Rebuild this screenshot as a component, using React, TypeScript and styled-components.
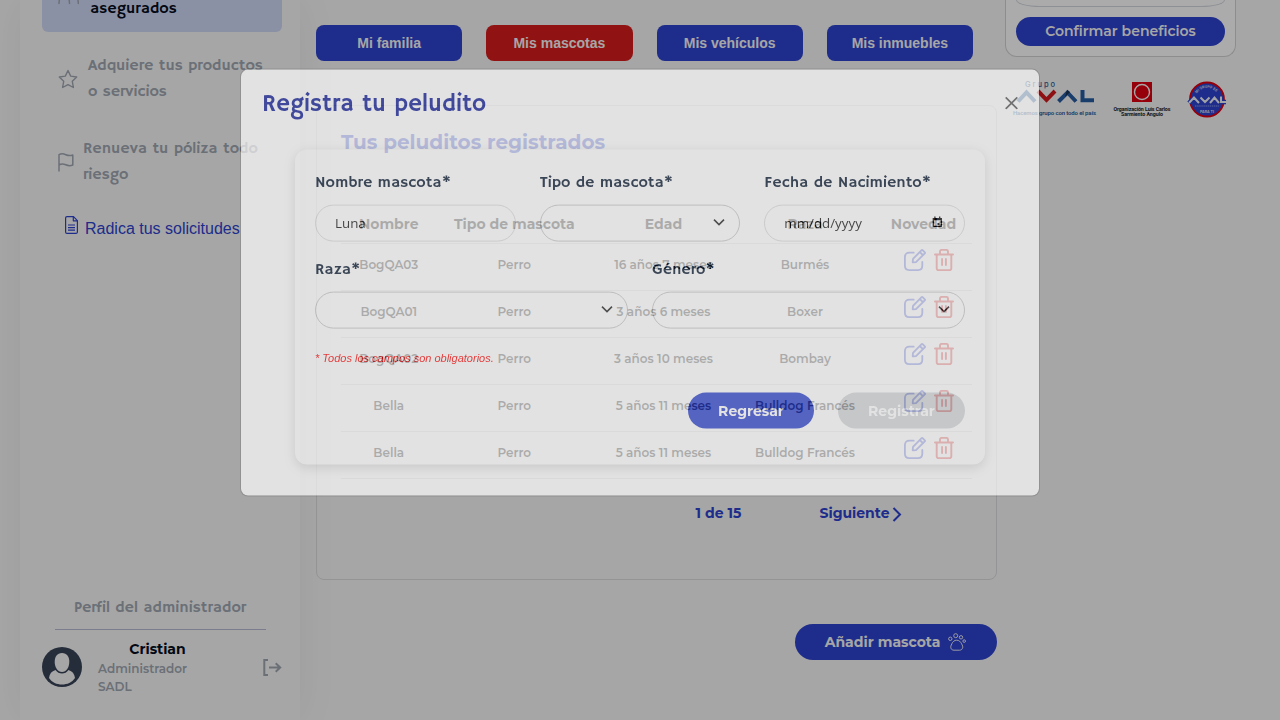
import React from "react";
import styled, { createGlobalStyle } from "styled-components";

const BLUE = "#2d42cf";
const MUTED = "#a0a7b2";
const ROUND = `Montserrat, Inter, sans-serif`;
const HUMAN = `"Hammersmith One", "Open Sans", sans-serif`;

const Global = createGlobalStyle`
  * { box-sizing: border-box; }
  body { margin: 0; background: #f8f8f8; overflow: hidden; }
  button, input { font: inherit; }
`;

const Page = styled.div`
  display: flex;
  width: 1280px;
  height: 720px;
  padding-left: 20px;
  overflow: hidden;
  background: #f8f8f8;
  font-family: ${ROUND};
`;

const Txt = styled.span`
  white-space: nowrap;
`;

/* ---------- sidebar ---------- */
const Sidebar = styled.aside`
  width: 280px;
  height: 720px;
  padding: 0 18px 0 22px;
  display: flex;
  flex-direction: column;
  flex-shrink: 0;
  box-shadow: 0 0 40px rgba(0, 0, 0, 0.06);
`;

const Nav = styled.nav`
  display: flex;
  flex-direction: column;
  height: 590px;
`;

const ActiveItem = styled.div`
  display: flex;
  height: 32px;
  flex-shrink: 0;
  padding-left: 14px;
  gap: 10px;
  border-radius: 0 0 6px 6px;
  background: #d0d9f5;
  color: #050d1c;
  font: 400 16px/26px ${HUMAN};
  svg { margin-top: -14px; color: ${MUTED}; }
  span { margin-top: -4px; }
`;

const NavItem = styled.div<{ $top: number; $gap: number }>`
  display: flex;
  align-items: center;
  height: 52px;
  flex-shrink: 0;
  margin-top: ${(p) => p.$top}px;
  padding-left: 16px;
  gap: ${(p) => p.$gap}px;
  color: ${MUTED};
  font: 400 16px/26px ${HUMAN};
  svg { flex-shrink: 0; }
`;

const Lines = styled.div`
  display: flex;
  flex-direction: column;
`;

const RequestLink = styled.div`
  display: flex;
  align-items: center;
  gap: 7px;
  margin-top: 28px;
  padding-left: 23px;
  color: ${BLUE};
  font: 16px/26px "Liberation Sans", Arial, sans-serif;
  svg { margin-top: -8px; }
`;

const ProfileTitle = styled.div`
  width: 211px;
  height: 40px;
  margin-left: 13px;
  padding-right: 1px;
  border-bottom: 1px solid #b9b9d6;
  text-align: center;
  color: ${MUTED};
  font: 400 16px/37px ${HUMAN};
`;

const Profile = styled.div`
  display: flex;
  padding-top: 10px;
`;

const AvatarBox = styled.div`
  padding-top: 7px;
  width: 56px;
`;

const ProfileText = styled.div`
  display: flex;
  flex-direction: column;
  width: 165px;
  color: ${MUTED};
  font: 600 12px/18px ${ROUND};
`;

const UserName = styled.strong`
  width: 119px;
  margin-bottom: 1px;
  text-align: center;
  color: #050d1c;
  font: 700 14px/19px ${ROUND};
`;

const LogoutBox = styled.div`
  padding-top: 19px;
  color: ${MUTED};
`;

/* ---------- main column ---------- */
const Main = styled.main`
  width: 697px;
  padding: 25px 0 0 16px;
  display: flex;
  flex-direction: column;
`;

const Tabs = styled.div`
  display: flex;
  gap: 24px;
  width: 657px;
`;

const Tab = styled.button<{ $active?: boolean }>`
  flex: 1;
  height: 36px;
  padding: 0;
  border: 0;
  border-radius: 8px;
  background: ${(p) => (p.$active ? "#d91b1b" : BLUE)};
  color: #f8f8f8;
  font: 700 14px "Liberation Sans", Arial, sans-serif;
`;

const PetsCard = styled.section`
  height: 475px;
  margin-top: 44px;
  padding: 23px 24px 0;
  border: 1px solid #dddde0;
  border-radius: 8px;
`;

const PetsTitle = styled.h2`
  margin: 0;
  color: ${BLUE};
  font: 700 20px/26px ${ROUND};
`;

const Table = styled.div`
  margin-top: 49px;
`;

const Row = styled.div<{ $head?: boolean }>`
  display: grid;
  grid-template-columns: 95.500px 155.500px 143px 140px 97px;
  align-items: ${(p) => (p.$head ? "center" : "start")};
  justify-items: center;
  height: ${(p) => (p.$head ? 40 : 47)}px;
  border-bottom: 1px solid #d6d6d6;
  color: #060606;
  font: ${(p) => (p.$head ? "700 14px/36px" : "600 12px/20px")} ${ROUND};
  padding-top: ${(p) => (p.$head ? 0 : 11)}px;
`;

const Actions = styled.div`
  display: flex;
  gap: 8px;
  margin-top: -6px;
  padding-left: 10px;
`;

const Pager = styled.div`
  display: flex;
  margin-top: 24px;
  padding-left: 354.500px;
  color: ${BLUE};
  font: 700 14px/20px ${ROUND};
`;

const PageCount = styled.span`
  width: 124px;
`;

const NextPage = styled.span`
  display: flex;
  align-items: center;
  gap: 3px;
  svg { margin-top: 2px; }
`;

const AddPet = styled.button`
  display: flex;
  align-items: center;
  justify-content: center;
  gap: 8px;
  align-self: flex-end;
  width: 202px;
  height: 36px;
  margin-top: 44px;
  border: 0;
  border-radius: 18px;
  padding: 0 7px 0 6px;
  background: ${BLUE};
  color: #f8f8f8;
  font: 700 14px ${ROUND};
`;

/* ---------- right column ---------- */
const Right = styled.aside`
  padding-left: 8px;
  width: 239px;
`;

const Benefits = styled.section`
  height: 57px;
  padding: 0 10px;
  border: 1px solid #d2d2d2;
  border-top: 0;
  border-radius: 0 0 12px 12px;
  background: #fff;
`;

const BenefitBox = styled.div`
  height: 7px;
  border: 1px solid #d3d8de;
  border-top: 0;
  border-radius: 0 0 24px 24px / 0 0 7px 7px;
`;

const Confirm = styled.button`
  display: block;
  width: 100%;
  height: 29px;
  margin-top: 10px;
  padding: 0 0 1px;
  border: 0;
  border-radius: 15px;
  background: ${BLUE};
  color: #f8f8f8;
  font: 600 14px ${ROUND};
`;

const Logos = styled.div`
  display: flex;
  margin-top: 22px;
  padding-left: 7px;
`;

const LogoGap = styled.div<{ $wide?: boolean }>`
  width: ${(p) => (p.$wide ? 14 : 10)}px;
`;

/* ---------- modal ---------- */
const Backdrop = styled.div`
  position: fixed;
  inset: 0;
  background: rgba(0, 0, 0, 0.33);
`;

const Modal = styled.div`
  position: fixed;
  top: 69px;
  left: 240px;
  width: 800px;
  height: 428px;
  border: 1px solid rgba(0, 0, 0, 0.2);
  border-radius: 8px;
  background: #fff;
  background-clip: padding-box;
  opacity: 0.663;
  padding: 12px 21px;
  transform: translateY(-0.4px);
`;

const ModalHead = styled.header`
  display: flex;
  justify-content: space-between;
  height: 68px;
  h1 {
    margin: 0;
    color: #0c1994;
    font: 400 24px/45px ${HUMAN};
  }
  svg { margin-top: 15px; }
`;

const Form = styled.form`
  width: 690px;
  height: 315px;
  margin-left: 33px;
  padding: 21px 20px 0;
  border-radius: 12px;
  background: #fff;
  box-shadow: 0 3px 12px rgba(0, 0, 0, 0.15);
`;

const Fields = styled.div`
  display: flex;
  gap: 24px;
  height: 87px;
`;

const Field = styled.label`
  flex: 1;
  color: #03142d;
  font: 400 16px/24px ${HUMAN};
`;

const Control = styled.div<{ $select?: boolean }>`
  display: flex;
  align-items: center;
  justify-content: space-between;
  height: 37px;
  margin-top: 10px;
  padding: 0 ${(p) => (p.$select ? 13 : 18)}px 2px 19px;
  border: 1px solid ${(p) => (p.$select ? "#c8c8c8" : "#dcdcdc")};
  border-radius: 19px;
  color: #111;
  font: 500 13.33px "Open Sans", sans-serif;
`;

const Note = styled.em`
  display: block;
  margin-top: 6px;
  color: #ff0505;
  font: italic 11px/14px "Liberation Sans", Arial, sans-serif;
`;

const Buttons = styled.div`
  display: flex;
  justify-content: flex-end;
  gap: 24px;
  margin-top: 28px;
`;

const Pill = styled.button<{ $off?: boolean }>`
  width: ${(p) => (p.$off ? 127 : 126)}px;
  height: 36px;
  border: 0;
  border-radius: 18px;
  padding: 0;
  background: ${(p) => (p.$off ? "#d3d6d9" : "#2c41cd")};
  color: #fff;
  font: 700 14px ${ROUND};
`;

/* ---------- drawings ---------- */
const Star = () => (
  <svg width="20" height="20" viewBox="0 0 20 20" fill="none" stroke="currentColor" strokeWidth="1.4" strokeLinejoin="round">
    <path d="M10 1.5l2.7 5.6 6 .9-4.4 4.3 1.1 6.2L10 15.6l-5.4 2.9 1.1-6.2L1.3 8l6-.9z" />
  </svg>
);
const Flag = () => (
  <svg width="16" height="20" viewBox="0 0 16 20" fill="none" stroke="currentColor" strokeWidth="1.5" strokeLinecap="round" strokeLinejoin="round">
    <path d="M1 19V2.700c2.200-1.300 4.500-1 6.800 0s4.500 1.300 7 .3v10c-2.500 1-4.700.8-7-.2s-4.600-1.200-6.800.2" />
  </svg>
);
const FileIcon = () => (
  <svg width="13" height="18" viewBox="0 0 13 18" fill="none" stroke="currentColor" strokeWidth="1.2" strokeLinejoin="round">
    <path d="M2 .6h6.500l3.900 4v11.300c0 .9-.6 1.500-1.500 1.500H2C1.100 17.400.6 16.800.6 15.900V2.100C.6 1.200 1.100.6 2 .6z" />
    <path d="M8.300.8v4h4M3 9h7M3 11.600h7M3 14.200h7" />
  </svg>
);
const People = () => (
  <svg width="24" height="20" viewBox="0 0 24 20" fill="none" stroke="currentColor" strokeWidth="1.500" strokeLinecap="round">
    <path d="M3 17.500c0-3 .4-5 2-6.500M13.500 17.500c0-3-.4-5-2-6.500M22.300 17.500c0-3-.4-5-2-6.500" />
  </svg>
);
const Avatar = () => (
  <svg width="40" height="40" viewBox="0 0 40 40">
    <circle cx="20" cy="20" r="20" fill="#394357" />
    <path d="M20 6c4.800 0 7.300 3.700 7.300 8.700 0 5.600-3 10.200-7.300 10.200s-7.300-4.600-7.300-10.200C12.700 9.700 15.200 6 20 6z" fill="#f8f8f8" />
    <path d="M13.500 23c1.700 2.500 3.900 3.400 6.500 3.400s4.800-.9 6.500-3.400c3.800 1.200 6 3.800 6.500 8-3.100 4.500-7.800 6.500-13 6.500S10.100 35.500 7 31c.5-4.200 2.700-6.800 6.500-8z" fill="#f8f8f8" />
  </svg>
);
const Logout = () => (
  <svg width="19" height="17" viewBox="0 0 19 17" fill="none" stroke="currentColor" strokeWidth="2">
    <path d="M5 1H1.300v15H5M6 8.500h11M12.700 4.200L17.200 8.500l-4.500 4.300" />
  </svg>
);
const Edit = () => (
  <svg width="22" height="22" viewBox="0 0 22 22" fill="none" stroke={BLUE} strokeWidth="1.800" strokeLinecap="round" strokeLinejoin="round">
    <path d="M9.700 3.700H5.500C2.400 3.700.9 5.200.9 8v8.800c0 2.900 1.500 4.300 4.300 4.300h8.800c2.900 0 4.300-1.500 4.300-4.300v-4" />
    <path d="M8.700 13.300l.3-3.400 8.600-8.700c.3-.3.700-.3 1 0l2.200 2.200c.3.300.3.700 0 1L12 13.100zM15.900 3.100l2.900 2.900" />
  </svg>
);
const Trash = () => (
  <svg width="20" height="22" viewBox="0 0 20 22" fill="none" stroke="#d91b1b" strokeWidth="1.900" strokeLinecap="round" strokeLinejoin="round">
    <path d="M1 5.500h18M6 5.300V2.600C6 1.500 6.600.9 7.700.9h4.600c1.100 0 1.700.6 1.700 1.700v2.700M2.700 5.700v13.600c0 1.200.7 1.900 1.900 1.900h10.800c1.200 0 1.900-.7 1.900-1.900V5.700M8.100 10v6M11.900 10v6" />
  </svg>
);
const Paw = () => (
  <svg width="18" height="18" viewBox="0 0 18 18" fill="none" stroke="#f8f8f8" strokeWidth=".9">
    <circle cx="7.700" cy="2.700" r="2" /><circle cx="2.300" cy="5.800" r="1.700" /><circle cx="13" cy="4.300" r="1.700" /><circle cx="16.200" cy="8.100" r="1.300" />
    <path d="M8.700 7.200c2.400 0 3.800 1.500 4.900 3.600.9 1.700 1.600 3 .8 4.600-.6 1.300-1.700 1.800-3 1.800H6c-1.400 0-2.500-.6-3-1.800-.6-1.600 0-2.900.8-4.600 1-2.100 2.500-3.600 4.900-3.600z" />
  </svg>
);
const Chevron = () => (
  <svg width="14" height="10" viewBox="0 0 14 10" fill="none" stroke="#222" strokeWidth="1.600">
    <path d="M2 2l5 5 5-5" />
  </svg>
);
const Calendar = () => (
  <svg width="16" height="13" viewBox="0 0 16 13" fill="none" stroke="#000" strokeWidth="1.300">
    <path d="M3.300 3h8v7.800h-8zM3.300 4h8M4.900 1v2M9.700 1v2" />
    <path d="M7.500 7.300h2v2h-2z" fill="#000" stroke="none" />
  </svg>
);

const GrupoAval = () => (
  <svg width="90" height="40" viewBox="0 0 90 40">
    <text x="13" y="8" fontFamily="Inter" fontSize="7.500" fontWeight="500" fill="#386195" textLength="30">Grupo</text>
    <g fill="none" strokeWidth="4">
      <path d="M6 22.500l8.500-9 8.500 9" stroke="#265da0" />
      <path d="M26 12l8.500 8.800L43 12" stroke="#d4191c" />
      <path d="M46.500 22.500l9-9 8.500 9" stroke="#265da0" />
      <path d="M70.500 11v10.200H82" stroke="#265da0" />
    </g>
    <path d="M55 11l3 2-5 5z" fill="#1a3350" />
    <text x="1" y="36" fontFamily="Roboto" fontSize="6" fontWeight="600" fill="#265da0" textLength="83">Hacemos grupo con todo el país</text>
  </svg>
);
const Organization = () => (
  <svg width="60" height="40" viewBox="0 0 60 40">
    <rect x="20" y="3" width="20" height="20" fill="#df0010" />
    <circle cx="30" cy="13" r="7.500" fill="none" stroke="#f8f8f8" strokeWidth="1.400" />
    <g fontFamily="Roboto" fontSize="5.300" fontWeight="700" textAnchor="middle" fill="#222">
      <text x="30" y="32" textLength="57">Organización Luis Carlos</text>
      <text x="30" y="37.300" textLength="42">Sarmiento Angulo</text>
    </g>
  </svg>
);
const Badge = () => (
  <svg width="42" height="40" viewBox="0 0 42 40">
    <circle cx="21" cy="20.500" r="17" fill={BLUE} stroke="#df0010" strokeWidth="1.800" />
    <path id="arcTop" d="M10.500 15.500a11.500 11.500 0 0 1 21 0" fill="none" />
    <text fontFamily="Inter" fontSize="3.400" fontWeight="600" fill="#e5e8f5"><textPath href="#arcTop" startOffset="1">MI GRUPO ES</textPath></text>
    <path d="M3 24l5-5.500 5 5.500M14.500 18.500l4.500 4.500 4.500-4.500M24 24l4.500-5.500 4.500 5.500M35 17.500v5.500H40" fill="none" stroke={BLUE} strokeWidth="4.500" />
    <path d="M3 24l5-5.500 5 5.500M14.500 18.500l4.500 4.500 4.500-4.500M24 24l4.500-5.500 4.500 5.500M35 17.500v5.500H40" fill="none" stroke="#f0f2fa" strokeWidth="2" />
    <path d="M9 27h24" stroke="#a3b0ea" strokeWidth=".8" strokeDasharray="1.500 .6" />
    <text x="21" y="34.300" fontFamily="Inter" fontSize="3.600" fontWeight="600" textAnchor="middle" fill="#e5e8f5">PARA TI</text>
  </svg>
);

const pets = [
  ["BogQA03", "Perro", "16 años 7 meses", "Burmés"],
  ["BogQA01", "Perro", "3 años 6 meses", "Boxer"],
  ["BogQA02", "Perro", "3 años 10 meses", "Bombay"],
  ["Bella", "Perro", "5 años 11 meses", "Bulldog Francés"],
  ["Bella", "Perro", "5 años 11 meses", "Bulldog Francés"],
];

const columns = ["Nombre", "Tipo de mascota", "Edad", "Raza", "Novedad"];

export default function App() {
  return (
    <>
      <Global />
      <Page>
        <Sidebar>
          <Nav>
            <ActiveItem><People /><Txt>asegurados</Txt></ActiveItem>
            <NavItem $top={21} $gap={10}>
              <Star />
              <Lines><Txt>Adquiere tus productos</Txt><Txt>o servicios</Txt></Lines>
            </NavItem>
            <NavItem $top={31} $gap={9}>
              <Flag />
              <Lines><Txt>Renueva tu póliza todo</Txt><Txt>riesgo</Txt></Lines>
            </NavItem>
            <RequestLink><FileIcon /><Txt>Radica tus solicitudes</Txt></RequestLink>
          </Nav>
          <ProfileTitle><Txt>Perfil del administrador</Txt></ProfileTitle>
          <Profile>
            <AvatarBox><Avatar /></AvatarBox>
            <ProfileText>
              <UserName>Cristian</UserName>
              <Txt>Administrador</Txt>
              <Txt>SADL</Txt>
            </ProfileText>
            <LogoutBox><Logout /></LogoutBox>
          </Profile>
        </Sidebar>

        <Main>
          <Tabs>
            <Tab>Mi familia</Tab>
            <Tab $active>Mis mascotas</Tab>
            <Tab>Mis vehículos</Tab>
            <Tab>Mis inmuebles</Tab>
          </Tabs>
          <PetsCard>
            <PetsTitle>Tus peluditos registrados</PetsTitle>
            <Table>
              <Row $head>
                {columns.map((h) => <Txt key={h}>{h}</Txt>)}
              </Row>
              {pets.map((pet, i) => (
                <Row key={i}>
                  {pet.map((v, j) => <Txt key={j}>{v}</Txt>)}
                  <Actions><Edit /><Trash /></Actions>
                </Row>
              ))}
            </Table>
            <Pager>
              <PageCount>1 de 15</PageCount>
              <NextPage>
                <Txt>Siguiente</Txt>
                <svg width="10" height="15" viewBox="0 0 10 15" fill="none" stroke="currentColor" strokeWidth="2"><path d="M1.500 1l6.500 6.500L1.500 14" /></svg>
              </NextPage>
            </Pager>
          </PetsCard>
          <AddPet><Txt>Añadir mascota</Txt><Paw /></AddPet>
        </Main>

        <Right>
          <Benefits>
            <BenefitBox />
            <Confirm>Confirmar beneficios</Confirm>
          </Benefits>
          <Logos><GrupoAval /><LogoGap /><Organization /><LogoGap $wide /><Badge /></Logos>
        </Right>
      </Page>

      <Backdrop />
      <Modal>
        <ModalHead>
          <h1>Registra tu peludito</h1>
          <svg width="13" height="13" viewBox="0 0 13 13" stroke="#555" strokeWidth="1.700"><path d="M.7.700l11.600 11.600M12.300.7L.7 12.300" /></svg>
        </ModalHead>
        <Form>
          <Fields>
            <Field><Txt>Nombre mascota*</Txt><Control><Txt>Luna</Txt></Control></Field>
            <Field><Txt>Tipo de mascota*</Txt><Control $select><span /><Chevron /></Control></Field>
            <Field><Txt>Fecha de Nacimiento*</Txt><Control><Txt>mm/dd/yyyy</Txt><Calendar /></Control></Field>
          </Fields>
          <Fields>
            <Field><Txt>Raza*</Txt><Control $select><span /><Chevron /></Control></Field>
            <Field><Txt>Género*</Txt><Control $select><span /><Chevron /></Control></Field>
          </Fields>
          <Note>* Todos los campos son obligatorios.</Note>
          <Buttons>
            <Pill type="button">Regresar</Pill>
            <Pill type="button" $off>Registrar</Pill>
          </Buttons>
        </Form>
      </Modal>
    </>
  );
}
